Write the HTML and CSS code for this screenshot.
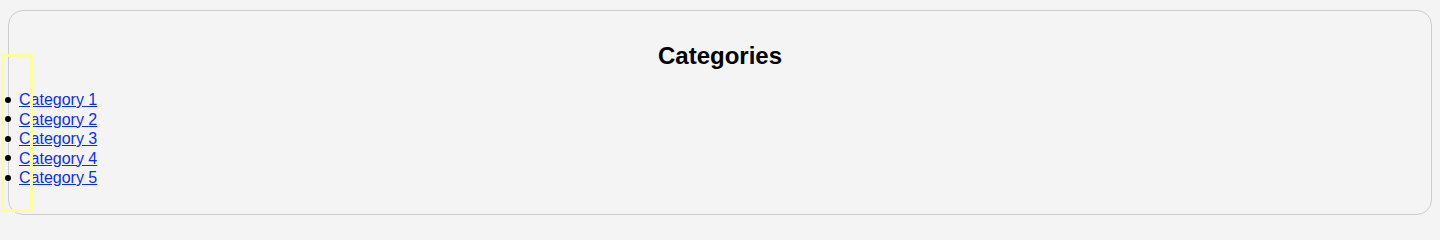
FILE: index.html
```html
<!DOCTYPE html>
<html lang="en">
<head>
<meta charset="utf-8">
<title>Categories</title>
<link rel="stylesheet" href="styles.css">
</head>
<body>
<div class="card">
  <h2 class="title">Categories</h2>
  <ul class="cat-list">
    <li><a href="#">Category 1</a></li>
    <li><a href="#">Category 2</a></li>
    <li><a href="#">Category 3</a></li>
    <li><a href="#">Category 4</a></li>
    <li><a href="#">Category 5</a></li>
  </ul>
</div>
<div class="highlight"></div>
</body>
</html>
```

FILE: styles.css
```css
html, body {
  background: #f4f4f4;
}
body {
  margin: 0;
  padding-top: 10px;
  font-family: "Liberation Sans", Arial, sans-serif;
  font-size: 16px;
  color: #000;
}
.card {
  margin: 0 8px;
  background: #f4f4f4;
  border: 1px solid #cccccc;
  border-radius: 15px;
  padding: 10px;
}
.title {
  font-size: 24px;
  font-weight: bold;
  text-align: center;
  margin: 21px 0 20px 0;
  line-height: 28px;
}
.cat-list {
  margin: 16px 0;
  padding: 0;
  line-height: 19.5px;
  list-style: none;
}
.cat-list li {
  display: flex;
  align-items: center;
}
.cat-list li::before {
  content: "";
  flex: none;
  width: 6px;
  height: 6px;
  border-radius: 50%;
  background: #000;
  margin: 0 8px 0 -14px;
}
.cat-list a {
  color: #0b2ff0;
  text-decoration: underline;
}
.highlight {
  position: absolute;
  left: 1px;
  top: 54px;
  width: 26px;
  height: 152px;
  border: 3px solid #fdfd99;
  pointer-events: none;
}
```
